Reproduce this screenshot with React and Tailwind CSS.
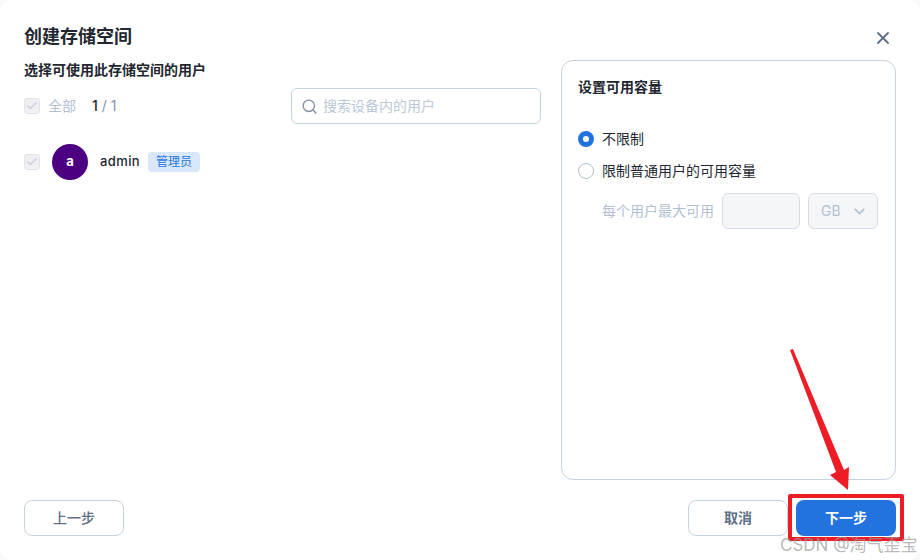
import React from 'react';
import { Search, X, ChevronDown, Check } from 'lucide-react';

function CheckBox() {
  return (
    <span className="w-4 h-4 rounded-[3px] border border-[#dfe4ec] bg-[#eef0f4] flex items-center justify-center shrink-0">
      <Check size={12} strokeWidth={3} className="text-[#c6d0de]" />
    </span>
  );
}

function App() {
  return (
    <div className="w-[920px] h-[560px] bg-[#f8f8f8] relative overflow-hidden font-['Inter','Noto_Sans_CJK_SC',sans-serif] text-[#23272f]">
      <div className="h-full flex flex-col px-6 pt-6 pb-6 bg-white rounded-xl">
        <div className="flex items-center justify-between h-6 shrink-0">
          <h1 className="text-lg font-bold leading-6 mt-[2px]">创建存储空间</h1>
          <X size={20} strokeWidth={2.2} className="text-[#5f6f88] mr-[3px] mt-1" />
        </div>
        <div className="flex flex-1 gap-5 mt-3 min-h-0">
          <div className="w-[517px] shrink-0">
            <h2 className="text-sm font-bold leading-5">选择可使用此存储空间的用户</h2>
            <div className="flex items-center justify-between mt-2">
              <div className="flex items-center">
                <CheckBox />
                <span className="text-sm text-[#b3c0d2] ml-2">全部</span>
                <span className="text-sm font-medium ml-4">1</span>
                <span className="text-sm text-[#8493a8] ml-1">/ 1</span>
              </div>
              <div className="w-[250px] h-9 rounded-md border border-[#c8d2e0] flex items-center px-[9px]">
                <Search size={17} className="text-[#8291a8]" />
                <span className="text-sm text-[#bcc7d6] ml-[5px]">搜索设备内的用户</span>
              </div>
            </div>
            <div className="flex items-center mt-5">
              <CheckBox />
              <span className="w-9 h-9 ml-3 rounded-full bg-[#4b0082] text-white text-[13px] font-bold flex items-center justify-center">a</span>
              <span className="text-[13px] font-medium ml-3 tracking-[0.4px]">admin</span>
              <span className="ml-2 h-5 px-2 rounded bg-[#d9e7fa] text-[#2676e2] text-xs flex items-center">管理员</span>
            </div>
          </div>
          <div className="w-[335px] h-[420px] rounded-xl border border-[#c8d2e0] px-4 pt-4">
            <h2 className="text-sm font-bold leading-5">设置可用容量</h2>
            <div className="flex items-center mt-[32px] h-5">
              <span className="w-4 h-4 rounded-full border-[5px] border-[#2272e0] bg-white" />
              <span className="text-sm ml-2">不限制</span>
            </div>
            <div className="flex items-center mt-3 h-5">
              <span className="w-4 h-4 rounded-full border border-[#b3c0d2] bg-white" />
              <span className="text-sm ml-2">限制普通用户的可用容量</span>
            </div>
            <div className="flex items-center mt-3 ml-6">
              <span className="text-sm text-[#b3c0d2]">每个用户最大可用</span>
              <span className="w-[78px] h-9 ml-2 rounded-md border border-[#d5dde8] bg-[#f5f6f8]" />
              <span className="w-[70px] h-9 ml-2 rounded-md border border-[#d5dde8] bg-[#f5f6f8] flex items-center justify-between pl-3 pr-[9px] text-sm text-[#b3c0d2]">
                GB
                <ChevronDown size={17} strokeWidth={2.5} className="text-[#b3c0d2]" />
              </span>
            </div>
          </div>
        </div>
        <div className="flex items-center justify-between shrink-0">
          <button className="w-[100px] h-9 rounded-lg border border-[#c8d2e0] text-sm font-medium text-[#5f6f88]">上一步</button>
          <div className="flex items-center gap-2">
            <button className="w-[100px] h-9 rounded-lg border border-[#c8d2e0] text-sm font-bold text-[#5f6f88]">取消</button>
            <button className="w-[100px] h-9 rounded-lg bg-[#2272e0] text-sm font-bold text-white">下一步</button>
          </div>
        </div>
      </div>

      {/* annotation drawn on top of the screenshot */}
      <div className="absolute left-[788px] top-[494px] w-[116px] h-[47px] border-[4px] rounded-[2px] border-[#ee1c25] pointer-events-none" />
      <svg className="absolute left-0 top-0 pointer-events-none" width="920" height="560">
        <polygon points="790,350 793,349 844,470 849,467 848,490 830,475 836,472" fill="#ee1c25" />
      </svg>
      <span className="absolute left-[780px] top-[535px] text-[17px] leading-5 text-[#9a9a9a]/70 pointer-events-none">CSDN @淘气歪宝</span>
    </div>
  );
}

export default App;
